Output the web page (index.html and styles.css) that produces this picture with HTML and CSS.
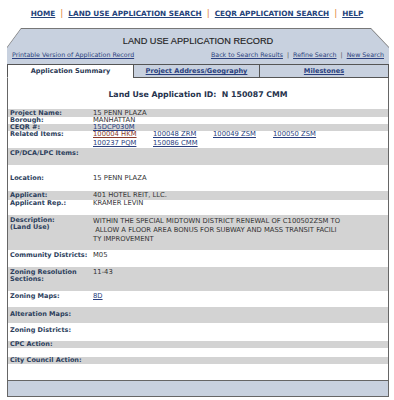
FILE: index.html
```html
<!DOCTYPE html>
<html>
<head>
  <title>Land Use Application Record</title>
  <link rel="stylesheet" href="styles.css">
</head>
<body>
  <div class="topnav">
    <a href="#">HOME</a><span class="sep">|</span><a href="#">LAND USE APPLICATION SEARCH</a><span class="sep">|</span><a href="#">CEQR APPLICATION SEARCH</a><span class="sep">|</span><a href="#">HELP</a>
  </div>

  <div class="record">
    <div class="record-head">
      <div class="head-fill">
        <div class="head-title">LAND USE APPLICATION RECORD</div>
        <div class="head-links">
          <a href="#">Printable Version of Application Record</a>
          <span class="right-links">
            <a href="#">Back to Search Results</a><span class="bar">|</span><a href="#">Refine Search</a><span class="bar">|</span><a href="#">New Search</a>
          </span>
        </div>
      </div>
    </div>

    <div class="tabs">
      <div class="tab active">Application Summary</div>
      <div class="tab"><a href="#">Project Address/Geography</a></div>
      <div class="tab"><a href="#">Milestones</a></div>
    </div>

    <div class="content">
      <div class="app-id">Land Use Application ID:&nbsp; N 150087 CMM</div>

      <div class="row gray h8">
        <div class="label">Project Name:</div><div class="value">15 PENN PLAZA</div>
      </div>
      <div class="row h7">
        <div class="label">Borough:</div><div class="value">MANHATTAN</div>
      </div>
      <div class="row gray h7">
        <div class="label">CEQR #:</div><div class="value"><a href="#">15DCP030M</a></div>
      </div>
      <div class="row h17">
        <div class="label">Related Items:</div>
        <div class="value related">
          <a href="#" class="visited">100004 HKM</a><a href="#">100048 ZRM</a><a href="#">100049 ZSM</a><a href="#">100050 ZSM</a>
          <a href="#">100237 PQM</a><a href="#">150086 CMM</a>
        </div>
      </div>
      <div class="row gray h17 pt2">
        <div class="label">CP/DCA/LPC Items:</div><div class="value"></div>
      </div>
      <div class="row h26 pt10">
        <div class="label">Location:</div><div class="value">15 PENN PLAZA</div>
      </div>
      <div class="row gray h9 pt1">
        <div class="label">Applicant:</div><div class="value">401 HOTEL REIT, LLC.</div>
      </div>
      <div class="row h15">
        <div class="label">Applicant Rep.:</div><div class="value">KRAMER LEVIN</div>
      </div>
      <div class="row gray h35 pt2">
        <div class="label">Description:<br>(Land Use)</div>
        <div class="value desc">WITHIN THE SPECIAL MIDTOWN DISTRICT RENEWAL OF C100502ZSM TO<br>&nbsp;ALLOW A FLOOR AREA BONUS FOR SUBWAY AND MASS TRANSIT FACILI<br>TY IMPROVEMENT</div>
      </div>
      <div class="row h17 pt2">
        <div class="label">Community Districts:</div><div class="value">M05</div>
      </div>
      <div class="row gray h24 pt2">
        <div class="label">Zoning Resolution<br>Sections:</div><div class="value">11-43</div>
      </div>
      <div class="row h16 pt2">
        <div class="label">Zoning Maps:</div><div class="value"><a href="#">8D</a></div>
      </div>
      <div class="row gray h16 pt4">
        <div class="label">Alteration Maps:</div><div class="value"></div>
      </div>
      <div class="row h18 pt4">
        <div class="label">Zoning Districts:</div><div class="value"></div>
      </div>
      <div class="row gray h7">
        <div class="label">CPC Action:</div><div class="value"></div>
      </div>
      <div class="row h9"></div>
      <div class="row gray h7">
        <div class="label">City Council Action:</div><div class="value"></div>
      </div>
      <div class="row h16"></div>
    </div>

    <div class="record-foot"></div>
  </div>
</body>
</html>
```

FILE: styles.css
```css
body {
  margin: 0;
  background-color: #fff;
  font-family: "DejaVu Sans", Verdana, sans-serif;
  color: #333;
}

a {
  color: #2a3f7e;
}

.topnav {
  height: 28px;
  padding-top: 8px;
  box-sizing: border-box;
  text-align: center;
  font-size: 7.3px;
  font-weight: bold;
  line-height: 10px;
}

.topnav a {
  color: #24427a;
}

.topnav .sep {
  color: #e0863a;
  font-weight: normal;
  font-size: 9px;
  margin: 0 5px;
}

.record {
  width: 382px;
  margin-left: 7px;
}

.record-head {
  background-color: #777;
  padding: 1px 0 0 0;
  clip-path: polygon(14px 0, calc(100% - 18px) 0, 100% 19px, 100% 100%, 0 100%, 0 19px);
}

.head-fill {
  height: 35px;
  background-color: #c8d1df;
  clip-path: polygon(14px 0, calc(100% - 18px) 0, 100% 19px, 100% 100%, 0 100%, 0 19px);
}

.head-title {
  padding-top: 7px;
  height: 14px;
  text-align: center;
  font-family: "Liberation Sans", Arial, sans-serif;
  font-size: 9.2px;
  line-height: 10px;
  color: #1e1e1e;
  -webkit-text-stroke: 0.15px #1e1e1e;
}

.head-links {
  display: flex;
  justify-content: space-between;
  padding: 0 5px 0 5px;
  margin-top: 1px;
  font-size: 6.3px;
  line-height: 8px;
}

.head-links .bar {
  color: #555;
  margin: 0 4px;
}

.tabs {
  display: grid;
  grid-template-columns: 126px 126px 1fr;
  border-top: 1px solid #555;
}

.tab {
  height: 12px;
  line-height: 12px;
  text-align: center;
  font-size: 6.6px;
  font-weight: bold;
  color: #2c3a55;
  background-color: #c8d1df;
  border-left: 1px solid #555;
  border-bottom: 1px solid #555;
}

.tab:last-child {
  border-right: 1px solid #555;
}

.tab.active {
  background-color: #fff;
  border-bottom-color: #fff;
}

.tab a {
  color: #2a3f7e;
}

.content {
  border-left: 1px solid #666;
  border-right: 1px solid #666;
  background-color: #fff;
}

.app-id {
  height: 31px;
  padding-top: 12px;
  box-sizing: border-box;
  text-align: center;
  font-size: 7.8px;
  font-weight: bold;
  color: #25324d;
  line-height: 9px;
}

.row {
  display: grid;
  grid-template-columns: 83px 1fr;
  padding-left: 2px;
  box-sizing: border-box;
  font-size: 6.5px;
  line-height: 7px;
}

.gray {
  background-color: #d3d3d3;
}

.label {
  font-weight: bold;
  color: #2c3e5c;
}

.value {
  color: #333;
  font-size: 6.8px;
}

.related {
  display: grid;
  grid-template-columns: 60px 60px 60px 60px;
  row-gap: 1px;
}

.related a.visited {
  color: #8a3a2c;
}

.desc {
  line-height: 9px;
}

.h7 { height: 7px; }
.h8 { height: 8px; padding-top: 1px; }
.h9 { height: 9px; }
.h15 { height: 15px; }
.h16 { height: 16px; }
.h17 { height: 17px; }
.h18 { height: 18px; }
.h24 { height: 24px; }
.h26 { height: 26px; }
.h35 { height: 35px; }

.pt1 { padding-top: 1px; }
.pt2 { padding-top: 2px; }
.pt4 { padding-top: 4px; }
.pt10 { padding-top: 10px; }

.record-foot {
  height: 15px;
  background-color: #c8d1df;
  border: 1px solid #666;
}
```
